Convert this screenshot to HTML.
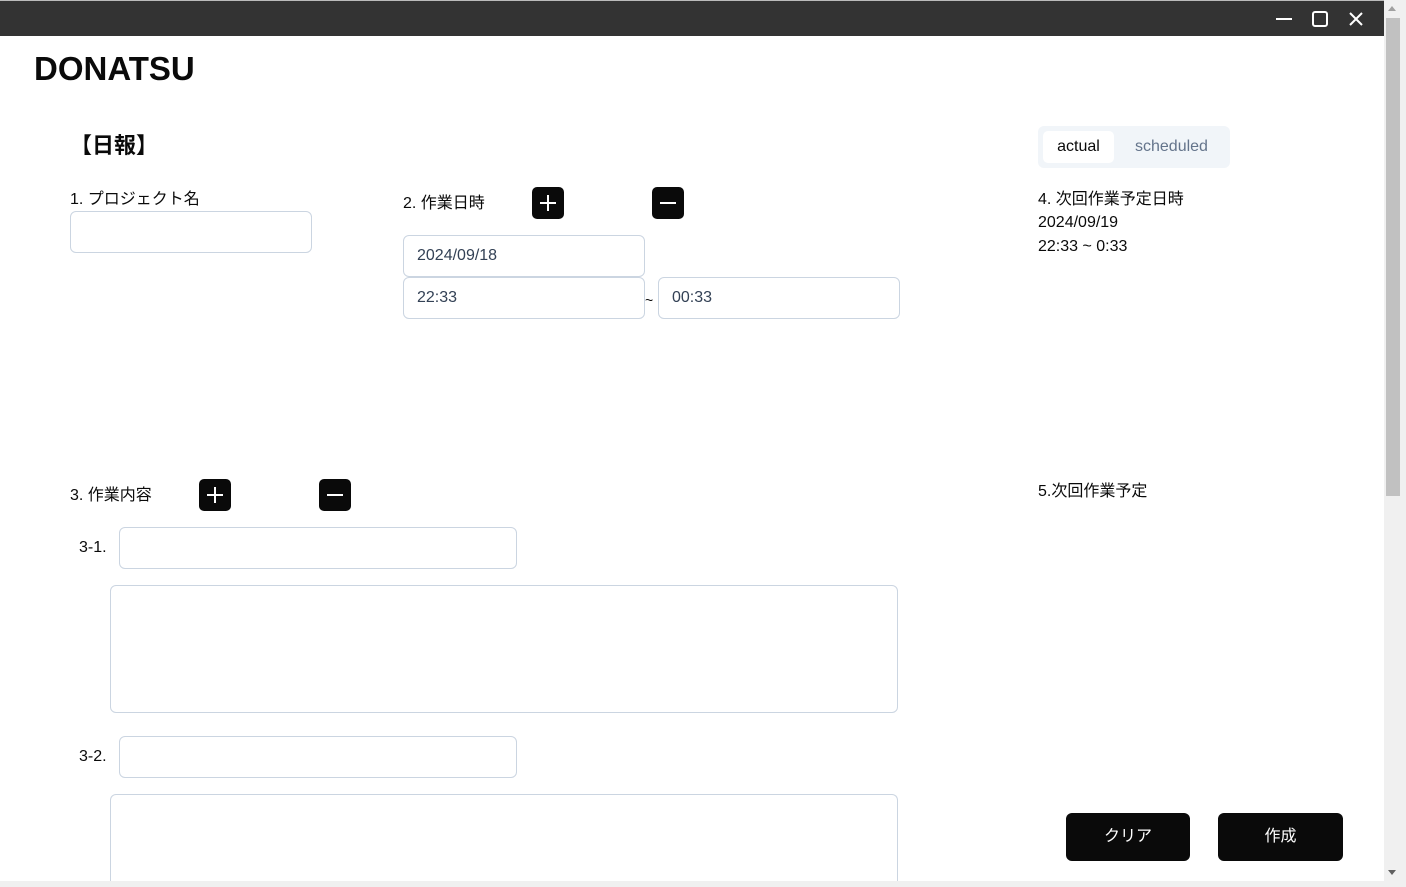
<!DOCTYPE html>
<html><head><meta charset="utf-8"><style>
*{box-sizing:border-box;margin:0;padding:0}
html,body{width:1406px;height:887px;overflow:hidden}
body{background:#fff;position:relative;font-family:"Liberation Sans","Noto Sans CJK JP",sans-serif;color:#0a0a0a}
.a{position:absolute}
.top{left:0;top:0;width:1384px;height:36px;background:#333;border-top:1px solid #bbb}
.sb{left:1384px;top:0;width:22px;height:887px;background:#f0f0f0;z-index:5}
.thumb{left:1386px;top:18px;width:14px;height:478px;background:#c1c1c1;z-index:6}
.in{position:absolute;border:1px solid #cbd5e1;border-radius:6px;background:#fff;font-size:16px;line-height:20px;color:#334155;padding-left:13px;display:flex;align-items:center}
.t{position:absolute;font-size:16px;line-height:20px;color:#0a0a0a;white-space:nowrap}
.btn{position:absolute;width:32px;height:32px;background:#0a0a0a;border-radius:5px}
.big{position:absolute;background:#0a0a0a;border-radius:6px;color:#fff;font-size:16px;line-height:20px;display:flex;align-items:center;justify-content:center}
</style></head><body>
<div class="a top"></div>
<svg class="a" style="left:1270px;top:8px" width="100" height="22">
<line x1="6" y1="11" x2="22" y2="11" stroke="#fff" stroke-width="2"/>
<rect x="43" y="4" width="14" height="14" rx="2" fill="none" stroke="#fff" stroke-width="2"/>
<path d="M80 5 L92 17 M92 5 L80 17" stroke="#fff" stroke-width="2"/>
</svg>
<div class="a sb"></div>
<div class="a thumb"></div>
<svg class="a" style="left:1388px;top:6px;z-index:7" width="10" height="6"><path d="M0 5 L4 0 L8 5Z" fill="#a0a0a0"/></svg>
<svg class="a" style="left:1388px;top:870px;z-index:7" width="10" height="6"><path d="M0 0 L8 0 L4 5Z" fill="#606060"/></svg>
<div class="a" style="left:0;top:881px;width:1384px;height:6px;background:#f0f0f0;z-index:5"></div>

<div class="t" style="left:34px;top:49px;font-size:33px;line-height:40px;font-weight:bold">DONATSU</div>
<div class="t" style="left:70px;top:134px;font-size:22px;line-height:24px;font-weight:bold">【日報】</div>

<div class="t" style="left:70px;top:190px">1. プロジェクト名</div>
<div class="in" style="left:70px;top:211px;width:242px;height:42px"></div>

<div class="t" style="left:403px;top:194px">2. 作業日時</div>
<div class="btn" style="left:532px;top:187px"><svg width="32" height="32"><path d="M16 8V24M8 16H24" stroke="#fff" stroke-width="2"/></svg></div>
<div class="btn" style="left:652px;top:187px"><svg width="32" height="32"><path d="M8 16H24" stroke="#fff" stroke-width="2"/></svg></div>
<div class="in" style="left:403px;top:235px;width:242px;height:42px">2024/09/18</div>
<div class="in" style="left:403px;top:277px;width:242px;height:42px">22:33</div>
<div class="t" style="left:645px;top:290px;font-size:14px">~</div>
<div class="in" style="left:658px;top:277px;width:242px;height:42px">00:33</div>

<div class="a" style="left:1038px;top:126px;width:192px;height:42px;background:#f1f5f9;border-radius:6px"></div>
<div class="a" style="left:1043px;top:131px;width:71px;height:32px;background:#fff;border-radius:5px;font-size:16px;display:flex;align-items:center;justify-content:center;color:#0a0a0a">actual</div>
<div class="t" style="left:1135px;top:137px;color:#64748b">scheduled</div>

<div class="t" style="left:1038px;top:190px">4. 次回作業予定日時</div>
<div class="t" style="left:1038px;top:213px">2024/09/19</div>
<div class="t" style="left:1038px;top:237px">22:33 ~ 0:33</div>

<div class="t" style="left:70px;top:486px">3. 作業内容</div>
<div class="btn" style="left:199px;top:479px"><svg width="32" height="32"><path d="M16 8V24M8 16H24" stroke="#fff" stroke-width="2"/></svg></div>
<div class="btn" style="left:319px;top:479px"><svg width="32" height="32"><path d="M8 16H24" stroke="#fff" stroke-width="2"/></svg></div>
<div class="t" style="left:79px;top:538px">3-1.</div>
<div class="in" style="left:119px;top:527px;width:398px;height:42px"></div>
<div class="in" style="left:110px;top:585px;width:788px;height:128px"></div>
<div class="t" style="left:79px;top:747px">3-2.</div>
<div class="in" style="left:119px;top:736px;width:398px;height:42px"></div>
<div class="in" style="left:110px;top:794px;width:788px;height:87px;border-bottom:none;border-radius:6px 6px 0 0"></div>

<div class="t" style="left:1038px;top:482px">5.次回作業予定</div>
<div class="big" style="left:1066px;top:813px;width:124px;height:48px">クリア</div>
<div class="big" style="left:1218px;top:813px;width:125px;height:48px">作成</div>
</body></html>
